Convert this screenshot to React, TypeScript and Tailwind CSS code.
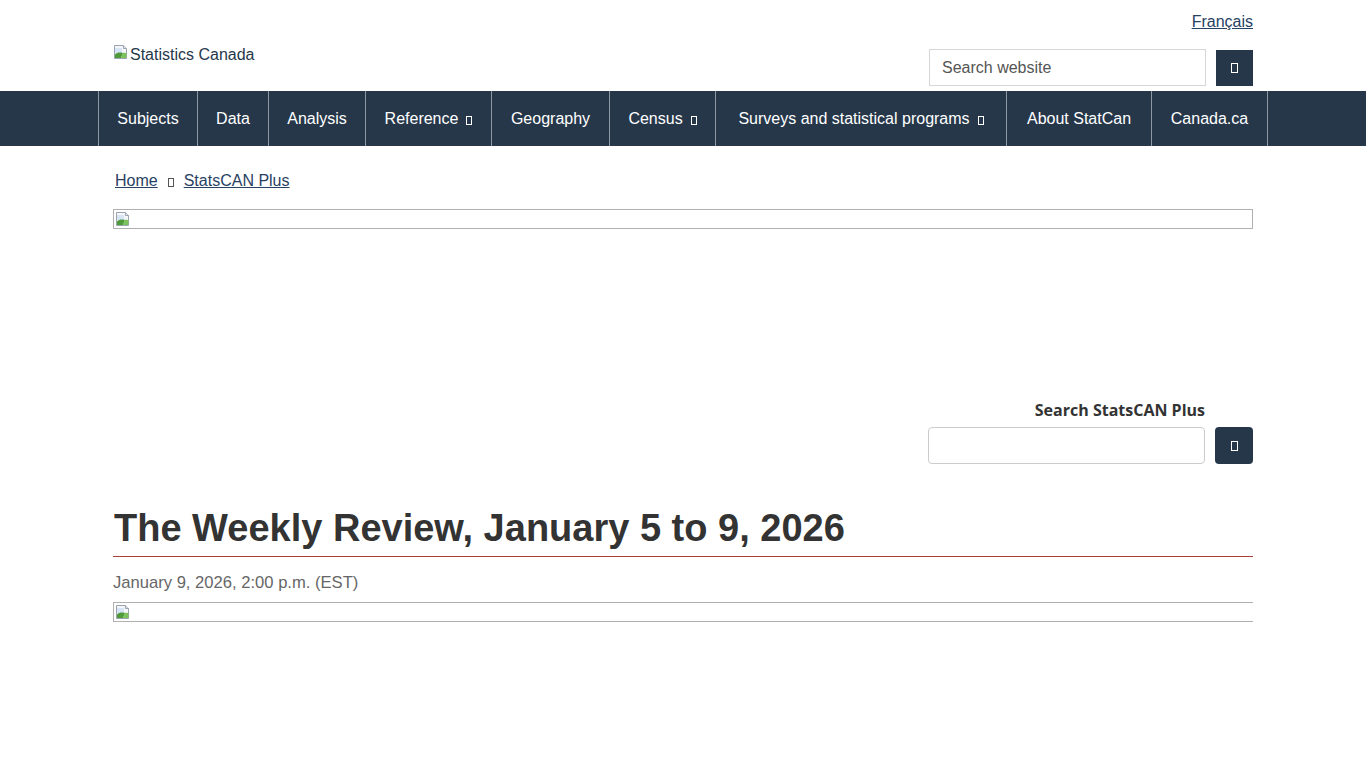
import React from "react";

function Tofu(props: { className?: string }) {
  return (
    <span
      className={
        "inline-block w-[6px] h-[9px] border border-current align-middle " +
        (props.className || "")
      }
    />
  );
}

function BrokenImage() {
  return (
    <svg width="16" height="16" viewBox="0 0 16 16" className="shrink-0">
      <path d="M1.5 1.5h9l3 3v10h-12z" fill="#f4f6fa" stroke="#9aa3b0" />
      <path d="M10.5 1.5v3h3" fill="#e3e7ee" stroke="#9aa3b0" />
      <path d="M2 4h7v5H2z" fill="#d6e4f5" />
      <path d="M2 14V10.5c2-2 4.5-2.5 8-1.5l-2 5z" fill="#4f9a3a" />
      <path d="M10 9c1.5-.5 2.7-.3 3.5.2V14H8z" fill="#7cc25a" />
    </svg>
  );
}

const navItems = [
  { label: "Subjects", w: "w-[99px]" },
  { label: "Data", w: "w-[71px]" },
  { label: "Analysis", w: "w-[97px]" },
  { label: "Reference", w: "w-[126px]", menu: true },
  { label: "Geography", w: "w-[118px]" },
  { label: "Census", w: "w-[106px]", menu: true },
  { label: "Surveys and statistical programs", w: "w-[291px]", menu: true },
  { label: "About StatCan", w: "w-[145px]" },
  { label: "Canada.ca", w: "w-[117px]" },
];

export default function App() {
  return (
    <div className="min-h-screen bg-white font-['Liberation_Sans',Arial,sans-serif] text-[#333]">
      {/* header */}
      <header>
        <div className="w-[1140px] mx-auto">
          <div className="flex justify-end pt-[12px] h-[49px]">
            <a href="#" className="text-[16px] leading-[20px] text-[#284162] underline">
              Français
            </a>
          </div>
          <div className="flex justify-between items-start h-[42px]">
            <div className="flex items-start mt-[-5px] text-[16px] text-[#26374a]">
              <BrokenImage />
              <span className="leading-[20px] ml-px mt-px">Statistics Canada</span>
            </div>
            <div className="flex">
              <div className="w-[277px] h-[37px] border border-[#d6d6d6] flex items-center px-[12px] text-[16px] text-[#555]">
                Search website
              </div>
              <button className="ml-[10px] w-[37px] h-[36px] mt-px bg-[#26374a] flex items-center justify-center text-white">
                <Tofu className="w-[7px] h-[10px]" />
              </button>
            </div>
          </div>
        </div>
        <nav className="bg-[#26374a] h-[55px]">
          <ul className="flex ml-[98px]">
            {navItems.map((item, i) => (
              <li
                key={item.label}
                className={
                  "border-l border-[#8e99a4] h-[55px] flex items-center justify-center text-white text-[16px] whitespace-nowrap " +
                  item.w +
                  (i === navItems.length - 1 ? " border-r" : "")
                }
              >
                {item.label}
                {item.menu && <Tofu className="ml-[8px] mt-[4px] w-[5px] h-[8px]" />}
              </li>
            ))}
          </ul>
        </nav>
      </header>

      <main className="w-[1140px] mx-auto">
        <div className="flex items-center mt-[25px] pl-[2px] text-[16px] leading-[20px] text-[#284162]">
          <a href="#" className="underline">Home</a>
          <Tofu className="mx-[10px] mt-[3px] w-[5px] h-[8px] text-[#555]" />
          <a href="#" className="underline">StatsCAN Plus</a>
        </div>

        <div className="mt-[18px] h-[20px] border border-[#b0b0b0] flex items-start p-px">
          <BrokenImage />
        </div>

        <div className="flex flex-col items-end mt-[170px]">
          <div className="mr-[48px] font-['Open_Sans',sans-serif] font-bold text-[16px] leading-[22px] text-[#333]">
            Search StatsCAN Plus
          </div>
          <div className="flex mt-[6px]">
            <div className="w-[277px] h-[37px] border border-[#ccc] rounded-[4px]" />
            <button className="ml-[10px] w-[38px] h-[37px] rounded-[4px] bg-[#26374a] flex items-center justify-center text-white">
              <Tofu className="w-[7px] h-[10px]" />
            </button>
          </div>
        </div>

        <h1 className="mt-[41px] pl-px text-[38px] leading-[46px] font-bold text-[#333] pb-[5px]">
          The Weekly Review, January 5 to 9, 2026
        </h1>
        <div className="h-px bg-[#a8403e]" />
        <p className="mt-[16px] text-[16.6px] leading-[20px] text-[#666]">
          January 9, 2026, 2:00 p.m. (EST)
        </p>
        <div className="mt-[9px] h-[20px] border-y border-l border-[#b0b0b0] flex items-start p-px">
          <BrokenImage />
        </div>
      </main>
    </div>
  );
}
